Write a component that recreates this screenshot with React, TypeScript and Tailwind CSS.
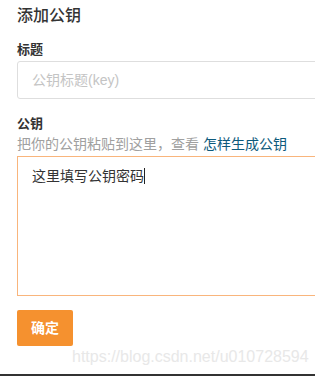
import React from "react";

export default function App() {
  const font = {
    fontFamily: '"Liberation Sans", "Noto Sans CJK SC", sans-serif',
  } as React.CSSProperties;
  return (
    <div
      className="relative w-[315px] h-[376px] overflow-hidden bg-white pl-[17px]"
      style={font}
    >
      <h2 className="pt-[4px] text-[16px] leading-[24px] font-medium text-[#333]">
        添加公钥
      </h2>
      <div className="mt-[12px] text-[13px] leading-[20px] font-bold text-[#333]">
        标题
      </div>
      <div className="mt-[1px] flex h-[38px] w-[320px] items-center rounded-[3px] border border-[#dedede] pl-[14px] text-[14px] text-[#c4c4c4]">
        公钥标题(key)
      </div>
      <div className="mt-[15px] text-[13px] leading-[20px] font-bold text-[#333]">
        公钥
      </div>
      <div className="text-[14px] leading-[20px] text-[#a0a0a0] whitespace-nowrap">
        把你的公钥粘贴到这里，查看 <span className="text-[#0d5a7c]">怎样生成公钥</span>
      </div>
      <div className="mt-[2px] h-[140px] w-[320px] border border-[#f9b57c] pl-[14px] pt-[9px] text-[14px] leading-[20px] text-[#333]">
        这里填写公钥密码
        <span className="inline-block h-[16px] w-[1px] bg-[#222] align-[-3px]" />
      </div>
      <button className="mt-[14px] flex h-[36px] w-[56px] items-center justify-center rounded-[2px] bg-[#f5912f] text-[14px] font-bold text-white">
        确定
      </button>
      <div className="absolute left-[72px] top-[347px] text-[16px] leading-[20px] text-[#e8e8e8]">
        https://blog.csdn.net/u010728594
      </div>
      <div className="absolute bottom-0 left-0 h-[2px] w-full bg-[#333]" />
    </div>
  );
}
